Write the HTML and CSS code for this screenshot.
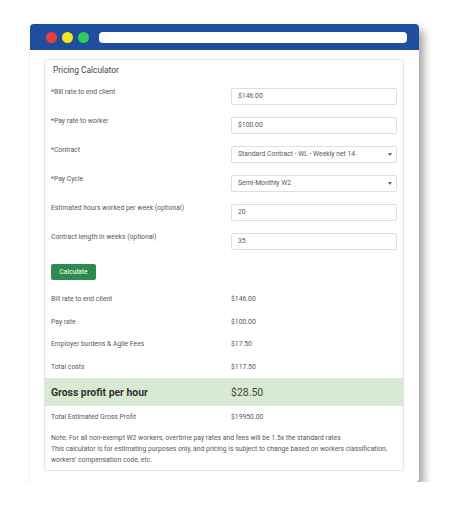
FILE: index.html
```html
<!DOCTYPE html>
<html>
<head>
<meta charset="utf-8">
<link rel="stylesheet" href="styles.css">
</head>
<body>
<div class="window">
  <div class="titlebar">
    <span class="dot red"></span>
    <span class="dot yellow"></span>
    <span class="dot green"></span>
    <span class="address"></span>
  </div>
  <div class="card">
    <div class="title">Pricing Calculator</div>
    <div class="form">
      <div class="row">
        <div class="label">*Bill rate to end client</div>
        <div class="control">$146.00</div>
      </div>
      <div class="row">
        <div class="label">*Pay rate to worker</div>
        <div class="control">$100.00</div>
      </div>
      <div class="row">
        <div class="label">*Contract</div>
        <div class="control select">Standard Contract - WL - Weekly net 14<span class="caret"></span></div>
      </div>
      <div class="row">
        <div class="label">*Pay Cycle</div>
        <div class="control select">Semi-Monthly W2<span class="caret"></span></div>
      </div>
      <div class="row">
        <div class="label">Estimated hours worked per week (optional)</div>
        <div class="control">20</div>
      </div>
      <div class="row">
        <div class="label">Contract length in weeks (optional)</div>
        <div class="control">35</div>
      </div>
    </div>
    <div class="actions">
      <button class="btn">Calculate</button>
    </div>
    <div class="results">
      <div class="res">
        <span>Bill rate to end client</span><span>$146.00</span>
      </div>
      <div class="res">
        <span>Pay rate</span><span>$100.00</span>
      </div>
      <div class="res">
        <span>Employer burdens &amp; Agile Fees</span><span>$17.50</span>
      </div>
      <div class="res">
        <span>Total costs</span><span>$117.50</span>
      </div>
      <div class="res highlight">
        <span class="hl-label">Gross profit per hour</span><span class="hl-value">$28.50</span>
      </div>
      <div class="res">
        <span>Total Estimated Gross Profit</span><span>$19950.00</span>
      </div>
    </div>
    <p class="note">Note: For all non-exempt W2 workers, overtime pay rates and fees will be 1.5x the standard rates<br>This calculator is for estimating purposes only, and pricing is subject to change based on workers classification,<br>workers' compensation code, etc.</p>
  </div>
</div>
</body>
</html>
```

FILE: styles.css
```css
* { box-sizing: border-box; }

html, body {
  margin: 0;
  padding: 0;
  background: #ffffff;
}

body {
  font-family: Roboto, "Liberation Sans", sans-serif;
  color: #585858;
  padding: 24px 0 0 30px;
}

.window {
  width: 389px;
  height: 458px;
  background: #ffffff;
  border-radius: 4px;
  box-shadow: 5px 6px 8px rgba(0, 0, 0, 0.35);
  display: flex;
  flex-direction: column;
  padding-bottom: 11px;
}

.titlebar {
  height: 26px;
  flex: none;
  background: #1f4e9f;
  border-radius: 4px 4px 0 0;
  display: flex;
  align-items: center;
  padding: 0 12px 0 15.5px;
  gap: 5px;
}

.dot {
  width: 11px;
  height: 11px;
  border-radius: 50%;
  flex: none;
}
.red { background: #e83e3e; }
.yellow { background: #f4e51d; }
.green { background: #2fcc5c; }

.address {
  flex: 1;
  height: 11px;
  margin-left: 5.5px;
  background: #ffffff;
  border-radius: 4px;
}

.card {
  margin: 9px 15px 0 14px;
  flex: 1;
  border: 1px solid #e4e4e4;
  border-radius: 3px;
}

.title {
  font-size: 8.4px;
  color: #454545;
  line-height: 10px;
  padding: 5px 0 0 8px;
  height: 28px;
}

.form {
  display: flex;
  flex-direction: column;
  gap: 12px;
  padding: 0 6px 0 6px;
}

.row {
  display: grid;
  grid-template-columns: 180px 1fr;
  height: 17px;
}

.label {
  font-size: 6.8px;
  line-height: 9px;
  color: #585858;
  white-space: nowrap;
}

.control {
  position: relative;
  height: 17px;
  border: 1px solid #dedede;
  border-radius: 2px;
  font-size: 6.8px;
  line-height: 15px;
  padding-left: 6px;
  color: #585858;
  white-space: nowrap;
}

.caret {
  position: absolute;
  right: 4px;
  top: 6px;
  width: 0;
  height: 0;
  border-left: 2.5px solid transparent;
  border-right: 2.5px solid transparent;
  border-top: 3px solid #666666;
}

.actions {
  padding: 14px 6px 0 6px;
}

.btn {
  display: block;
  width: 45px;
  height: 16px;
  padding: 0;
  border: none;
  border-radius: 2px;
  background: #2e8b4f;
  color: #ffffff;
  font-family: Roboto, "Liberation Sans", sans-serif;
  font-size: 6.8px;
  line-height: 16px;
  text-align: center;
}

.results {
  margin-top: 8px;
}

.res {
  display: grid;
  grid-template-columns: 180px 1fr;
  align-items: center;
  height: 22.5px;
  padding: 0 6px;
  font-size: 6.8px;
  color: #585858;
}

.res.highlight {
  height: 28px;
  background: #d9ead3;
}

.hl-label {
  font-size: 10.4px;
  font-weight: 700;
  color: #333333;
}

.hl-value {
  font-size: 10.5px;
  color: #444444;
}

.note {
  margin: 4px 0 0 0;
  padding: 0 6px;
  font-size: 6.8px;
  line-height: 11px;
  color: #585858;
}
```
